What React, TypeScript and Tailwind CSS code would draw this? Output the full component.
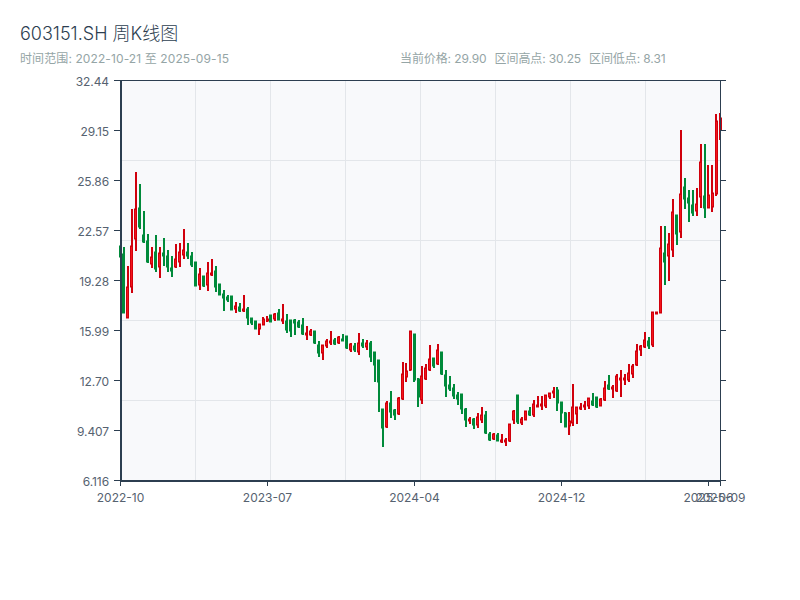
import React from 'react';

// [direction, wick top, wick bottom, body top, body bottom] in chart pixels
type Candle = [string, number, number, number, number];

const candles: Candle[] = [
  ['g', 246, 257, 246, 257], ['g', 247, 313, 254, 313], ['r', 266, 318, 287, 318], ['r', 209, 293, 246, 287],
  ['r', 172, 251, 209, 239], ['g', 184, 229, 208, 227], ['g', 211, 243, 235, 242], ['g', 234, 263, 241, 262],
  ['r', 247, 268, 257, 264], ['g', 235, 272, 252, 269], ['r', 247, 278, 253, 267], ['g', 238, 266, 253, 256],
  ['g', 250, 272, 256, 267], ['g', 256, 277, 268, 271], ['r', 244, 268, 259, 267], ['r', 243, 267, 252, 262],
  ['r', 229, 259, 250, 255], ['g', 243, 259, 252, 256], ['g', 252, 267, 256, 265], ['g', 262, 286, 262, 286],
  ['r', 268, 290, 274, 285], ['g', 276, 287, 276, 286], ['r', 262, 291, 273, 285], ['r', 259, 276, 273, 275],
  ['g', 266, 292, 271, 287], ['g', 284, 295, 284, 295], ['g', 290, 311, 294, 298], ['g', 295, 302, 297, 300],
  ['g', 296, 310, 296, 310], ['r', 302, 313, 306, 309], ['g', 303, 312, 307, 311], ['r', 295, 312, 309, 311],
  ['g', 307, 325, 309, 318], ['g', 318, 325, 318, 323], ['g', 321, 329, 321, 329], ['r', 324, 335, 324, 329],
  ['r', 317, 325, 319, 325], ['r', 316, 322, 319, 321], ['g', 315, 322, 315, 322], ['r', 313, 321, 314, 319],
  ['g', 309, 320, 313, 320], ['r', 304, 324, 319, 321], ['g', 314, 333, 321, 330], ['g', 320, 337, 320, 331],
  ['g', 319, 335, 320, 323], ['g', 320, 328, 322, 327], ['g', 318, 335, 325, 334], ['r', 326, 340, 333, 335],
  ['r', 329, 336, 331, 335], ['g', 331, 344, 331, 343], ['g', 341, 357, 345, 353], ['r', 345, 360, 345, 353],
  ['r', 339, 348, 341, 346], ['r', 331, 345, 341, 343], ['g', 338, 345, 340, 344], ['r', 336, 344, 337, 343],
  ['g', 334, 341, 339, 341], ['g', 336, 349, 336, 348], ['r', 343, 352, 344, 350], ['g', 343, 352, 346, 350],
  ['r', 333, 355, 343, 352], ['g', 339, 348, 343, 346], ['r', 340, 350, 343, 347], ['g', 341, 362, 343, 357],
  ['g', 352, 382, 352, 365], ['g', 360, 412, 360, 382], ['g', 409, 447, 409, 428], ['r', 401, 428, 403, 427],
  ['g', 391, 418, 403, 412], ['g', 409, 420, 410, 415], ['r', 397, 415, 398, 414], ['r', 362, 400, 374, 399],
  ['r', 363, 382, 371, 377], ['r', 331, 371, 331, 370], ['g', 334, 382, 334, 380], ['g', 378, 407, 379, 397],
  ['r', 366, 404, 376, 400], ['r', 364, 380, 368, 379], ['r', 345, 371, 359, 370], ['g', 358, 368, 358, 366],
  ['r', 344, 365, 350, 364], ['g', 352, 375, 352, 374], ['g', 370, 397, 375, 386], ['g', 376, 391, 385, 389],
  ['g', 384, 399, 388, 396], ['g', 392, 405, 395, 399], ['g', 394, 414, 394, 409], ['g', 408, 427, 409, 420],
  ['r', 417, 424, 419, 421], ['g', 418, 429, 419, 425], ['r', 413, 428, 417, 425], ['r', 407, 423, 415, 420],
  ['g', 411, 434, 415, 433], ['g', 432, 441, 434, 440], ['r', 433, 440, 434, 439], ['g', 433, 441, 435, 441],
  ['r', 434, 443, 440, 442], ['r', 438, 446, 440, 442], ['r', 424, 442, 424, 441], ['r', 410, 424, 411, 420],
  ['g', 395, 424, 395, 422], ['r', 417, 425, 419, 423], ['r', 411, 420, 411, 420], ['g', 407, 416, 411, 415],
  ['r', 400, 417, 404, 415], ['r', 396, 407, 405, 407], ['r', 396, 410, 404, 406], ['r', 395, 408, 395, 406],
  ['r', 393, 399, 393, 397], ['r', 387, 398, 391, 393], ['g', 387, 411, 390, 403], ['g', 402, 423, 402, 413],
  ['g', 412, 427, 413, 427], ['r', 412, 435, 421, 426], ['r', 384, 426, 407, 423], ['r', 407, 424, 407, 414],
  ['r', 403, 410, 407, 409], ['r', 401, 410, 405, 407], ['r', 398, 409, 398, 406], ['g', 393, 406, 401, 405],
  ['g', 397, 408, 397, 407], ['r', 398, 406, 399, 406], ['r', 381, 401, 388, 400], ['g', 375, 390, 385, 389],
  ['r', 385, 398, 387, 389], ['r', 374, 392, 376, 391], ['r', 370, 397, 378, 380], ['r', 374, 385, 378, 380],
  ['r', 364, 382, 373, 380], ['r', 364, 378, 366, 374], ['r', 344, 366, 351, 365], ['r', 345, 356, 346, 350],
  ['r', 332, 348, 340, 347], ['g', 337, 349, 341, 346], ['r', 312, 347, 312, 345], ['r', 312, 314, 312, 314],
  ['r', 226, 313, 248, 313], ['g', 226, 285, 253, 262], ['r', 233, 281, 244, 256], ['r', 199, 257, 212, 250],
  ['g', 215, 245, 215, 234], ['r', 130, 238, 194, 232], ['g', 178, 209, 187, 199], ['g', 190, 222, 198, 203],
  ['g', 190, 216, 205, 213], ['r', 188, 216, 204, 211], ['r', 144, 208, 162, 197], ['g', 144, 218, 196, 208],
  ['r', 165, 208, 195, 208], ['r', 165, 212, 193, 207], ['r', 114, 196, 121, 194], ['r', 113, 140, 118, 130],
];

const stepX = 600 / 151;
const yTicks = [
  { y: 80, label: '32.44' },
  { y: 130, label: '29.15' },
  { y: 180, label: '25.86' },
  { y: 230, label: '22.57' },
  { y: 280, label: '19.28' },
  { y: 330, label: '15.99' },
  { y: 380, label: '12.70' },
  { y: 430, label: '9.407' },
  { y: 480, label: '6.116' },
];
const xTicks = [
  { i: 0, label: '2022-10' },
  { i: 37, label: '2023-07' },
  { i: 74, label: '2024-04' },
  { i: 111, label: '2024-12' },
  { i: 148, label: '2025-06' },
  { i: 151, label: '2025-09' },
];
const gridX = [195, 270, 345, 420, 495, 570, 645];
const gridY = [160, 240, 320, 400];

function KLineChart() {
  return (
    <svg width={800} height={530} viewBox="0 70 800 530" className="block">
      <rect x={120} y={80} width={600} height={400} fill="#f8f9fb" />
      {gridX.map((x) => (
        <line key={x} x1={x + 0.5} x2={x + 0.5} y1={80} y2={480} stroke="#e3e6ea" />
      ))}
      {gridY.map((y) => (
        <line key={y} x1={120} x2={720} y1={y + 0.5} y2={y + 0.5} stroke="#e3e6ea" />
      ))}

      {candles.map(([dir, high, low, top, bottom], i) => {
        const x = 120 + stepX * i;
        const up = dir === 'r';
        return (
          <g key={i}>
            <line
              x1={Math.round(x + 0.4)}
              x2={Math.round(x + 0.4)}
              y1={high}
              y2={low}
              stroke={up ? '#d0000c' : '#008a3a'}
              strokeWidth={2}
            />
            <rect
              x={Math.round(x - 1.5) + 0.5}
              y={top}
              width={2}
              height={Math.max(bottom - top, 1)}
              fill={up ? '#f4141a' : '#008a3a'}
              stroke={up ? '#d0000c' : '#008a3a'}
            />
          </g>
        );
      })}

      {/* axes are drawn over the candles */}
      <path d="M114 80.5H726" stroke="#2c3e50" fill="none" />
      <path d="M121 80V481" stroke="#2c3e50" strokeWidth={2} fill="none" />
      <path d="M120 481H721" stroke="#2c3e50" strokeWidth={2} fill="none" />
      <path d="M720.5 80V481" stroke="#2c3e50" fill="none" />
      {yTicks.map((t) => (
        <g key={t.label}>
          <line x1={114} x2={120} y1={t.y + 0.5} y2={t.y + 0.5} stroke="#2c3e50" />
          <line x1={721} x2={726} y1={t.y + 0.5} y2={t.y + 0.5} stroke="#2c3e50" />
          <text x={109} y={t.y + 6} textAnchor="end" fontSize={12} letterSpacing={-0.1} fill="#566270">
            {t.label}
          </text>
        </g>
      ))}
      {xTicks.map((t) => {
        const x = Math.round(120 + stepX * t.i) + 0.5;
        return (
          <g key={t.label}>
            <line x1={x} x2={x} y1={481} y2={486} stroke="#2c3e50" />
            <text x={x} y={502} textAnchor="middle" fontSize={12} fill="#566270">
              {t.label}
            </text>
          </g>
        );
      })}
    </svg>
  );
}

export default function App() {
  return (
    <div className="w-[800px] h-[600px] overflow-hidden bg-white font-['Inter','Noto_Sans_CJK_SC',sans-serif]">
      <div className="h-[70px] px-5 pt-[22px]">
        <h1 className="text-[18px] leading-[24px] font-light text-[#2c3e50]">603151.SH 周K线图</h1>
        <div className="mt-[3px] flex text-xs leading-[20px] text-[#95a5a6]">
          <span className="w-[380px] tracking-[0.1px]">时间范围: 2022-10-21 至 2025-09-15</span>
          <div className="flex gap-2 tracking-[-0.1px]">
            <span>当前价格: 29.90</span>
            <span>区间高点: 30.25</span>
            <span>区间低点: 8.31</span>
          </div>
        </div>
      </div>
      <KLineChart />
    </div>
  );
}
